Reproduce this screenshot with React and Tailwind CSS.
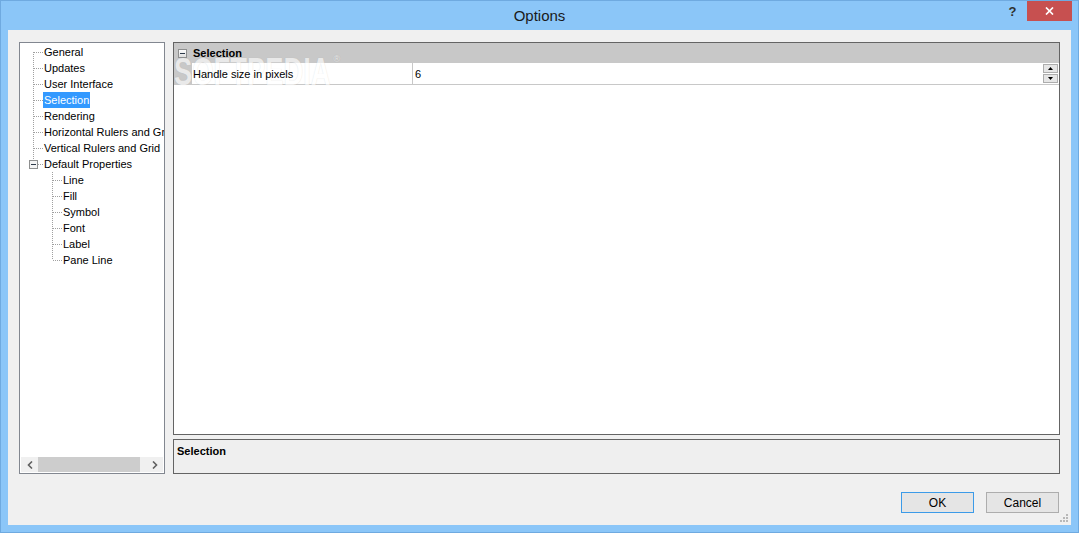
import { useState } from "react";

const FONT = "font-['Liberation_Sans',Arial,sans-serif]";

const treeItems = [
  { label: "General", level: 0, first: true },
  { label: "Updates", level: 0 },
  { label: "User Interface", level: 0 },
  { label: "Selection", level: 0 },
  { label: "Rendering", level: 0 },
  { label: "Horizontal Rulers and Grid", level: 0 },
  { label: "Vertical Rulers and Grid", level: 0 },
  { label: "Default Properties", level: 0, last: true, expander: true },
  { label: "Line", level: 1, first: true },
  { label: "Fill", level: 1 },
  { label: "Symbol", level: 1 },
  { label: "Font", level: 1 },
  { label: "Label", level: 1 },
  { label: "Pane Line", level: 1, last: true },
];

// minus box used by tree and property grid
function MinusBox() {
  return (
    <svg width="9" height="9" viewBox="0 0 9 9" className="shrink-0">
      <defs>
        <linearGradient id="mb" x1="0" y1="0" x2="0" y2="1">
          <stop offset="0" stopColor="#ffffff" />
          <stop offset="1" stopColor="#dcdcdc" />
        </linearGradient>
      </defs>
      <rect x="0.5" y="0.5" width="8" height="8" fill="url(#mb)" stroke="#8e8f8f" />
      <line x1="2" y1="4.5" x2="7" y2="4.5" stroke="#2d3a4a" />
    </svg>
  );
}

function Connector({ level, first, last, expander }) {
  const cx = 13 + 19 * level;
  const w = cx + 10;
  const dot = { stroke: "#a0a0a0", strokeDasharray: "1 1" };
  const x = cx + 0.5;
  return (
    <svg width={w} height="16" className="shrink-0">
      {level === 0 ? (
        <line x1={x} y1={first ? 8 : 0} x2={x} y2={last ? (expander ? 4 : 8) : 16} {...dot} />
      ) : (
        <line x1={x} y1={0} x2={x} y2={last ? 8 : 16} {...dot} />
      )}
      <line x1={expander ? cx + 5 : cx + 1} y1="8.5" x2={cx + 10} y2="8.5" {...dot} />
      {expander && (
        <g transform={`translate(${cx - 4},4)`}>
          <rect x="0.5" y="0.5" width="8" height="8" fill="#f4f4f4" stroke="#8e8f8f" />
          <line x1="2" y1="4.5" x2="7" y2="4.5" stroke="#2d3a4a" />
        </g>
      )}
    </svg>
  );
}

function Chevron({ dir }) {
  return (
    <svg width="6" height="8" viewBox="0 0 6 8">
      <polyline
        points={dir === "left" ? "5,0.5 1.5,4 5,7.5" : "1,0.5 4.5,4 1,7.5"}
        fill="none"
        stroke="#606060"
        strokeWidth="1.6"
      />
    </svg>
  );
}

export default function App() {
  const [selected, setSelected] = useState("Selection");

  return (
    <div className={`w-[1079px] h-[533px] bg-[#8BC6F8] border border-[#6FAAE0] flex flex-col text-[11px] text-black ${FONT}`}>
      {/* title bar */}
      <div className="h-[29px] flex items-start shrink-0">
        <div className="w-[80px]" />
        <div className="flex-1 text-center text-[15px] leading-[29px] text-[#1a1a1a]">Options</div>
        <div className="w-[80px] flex items-start">
          <div className="w-[29px] text-center text-[13px] font-bold leading-[22px] text-[#303030]">?</div>
          <div className="w-[45px] h-[20px] bg-[#C75050] flex items-center justify-center">
            <svg width="9" height="8" viewBox="0 0 9 8">
              <path d="M1 0.5 L8 7.5 M8 0.5 L1 7.5" stroke="white" strokeWidth="1.7" />
            </svg>
          </div>
        </div>
      </div>

      {/* client area */}
      <div className="relative flex-1 mx-[7px] mb-[7px] bg-[#F0F0F0] flex flex-col pt-[12px] px-[11px]">
        <div className="flex gap-[8px] h-[432px]">
          {/* tree */}
          <div className="w-[146px] border border-[#828790] bg-white flex flex-col">
            <div className="flex-1 overflow-hidden pt-[1px]">
              {treeItems.map((it) => (
                <div
                  key={it.label}
                  className="h-4 flex items-center whitespace-nowrap cursor-default"
                  onClick={() => setSelected(it.label)}
                >
                  <Connector {...it} />
                  <span
                    className={`h-4 leading-4 px-px ${
                      selected === it.label ? "bg-[#3399FF] text-white" : ""
                    }`}
                  >
                    {it.label}
                  </span>
                </div>
              ))}
            </div>
            <div className="h-[15px] mx-px mb-px bg-[#F0F0F0] flex items-center">
              <div className="w-[17px] h-full flex items-center justify-center">
                <Chevron dir="left" />
              </div>
              <div className="w-[102px] h-full bg-[#CDCDCD]" />
              <div className="flex-1" />
              <div className="w-[17px] h-full flex items-center justify-center">
                <Chevron dir="right" />
              </div>
            </div>
          </div>

          {/* property grid + description */}
          <div className="flex-1 flex flex-col gap-[4px]">
            <div className="relative h-[393px] border border-[#646464] bg-white flex flex-col overflow-hidden">
              {/* watermark, drawn under the grid texts */}
              <div className="absolute left-[0px] top-[10px] pointer-events-none flex items-start opacity-60">
                <span className="text-[38px] font-bold leading-[38px] text-white scale-x-[0.72] origin-left inline-block [text-shadow:0_0_1px_rgba(0,0,0,0.2)]">
                  SOFTPEDIA
                </span>
                <span className="-ml-[58px] text-[9px] text-white [text-shadow:0_0_1px_rgba(0,0,0,0.3)]">®</span>
              </div>
              <div className="h-[20px] bg-[#C8C8C8] flex items-center pl-[4px] gap-[6px] shrink-0">
                <MinusBox />
                <span className="relative font-bold pt-px">Selection</span>
              </div>
              <div className="h-[22px] border-b border-[#C8C8C8] flex shrink-0">
                <div className="w-[18px] bg-[#C8C8C8]" />
                <div className="w-[221px] border-r border-[#C8C8C8] pl-px pt-px flex items-center">
                  <span className="relative">Handle size in pixels</span>
                </div>
                <div className="flex-1 pl-[2px] pt-px flex items-center">6</div>
                <div className="mr-[1px] pt-[1px] flex flex-col gap-px">
                  <div className="w-[15px] h-[9px] border border-[#ADADAD] bg-[#E6E6E6] flex items-center justify-center">
                    <svg width="5" height="3" viewBox="0 0 5 3"><path d="M2.5 0 L5 3 L0 3 Z" fill="#000" /></svg>
                  </div>
                  <div className="w-[15px] h-[9px] border border-[#ADADAD] bg-[#E6E6E6] flex items-center justify-center">
                    <svg width="5" height="3" viewBox="0 0 5 3"><path d="M0 0 L5 0 L2.5 3 Z" fill="#000" /></svg>
                  </div>
                </div>
              </div>
            </div>
            <div className="h-[35px] border border-[#646464] bg-[#EFEFEF] pl-[3px] pt-[3px] font-bold">
              Selection
            </div>
          </div>
        </div>

        {/* buttons */}
        <div className="mt-[18px] flex justify-end gap-[12px] mr-[1px]">
          <button className="w-[73px] h-[21px] border border-[#3C9BE8] bg-[#E5E5E5] text-[12px] leading-none">
            OK
          </button>
          <button className="w-[73px] h-[21px] border border-[#ADADAD] bg-[#E5E5E5] text-[12px] leading-none">
            Cancel
          </button>
        </div>

        {/* resize grip */}
        <svg width="8" height="8" viewBox="0 0 8 8" className="absolute right-[3px] bottom-[3px]">
          <rect x="6" y="0" width="2" height="2" fill="#B8B8B8" />
          <rect x="3" y="3" width="2" height="2" fill="#B8B8B8" />
          <rect x="6" y="3" width="2" height="2" fill="#B8B8B8" />
          <rect x="0" y="6" width="2" height="2" fill="#B8B8B8" />
          <rect x="3" y="6" width="2" height="2" fill="#B8B8B8" />
          <rect x="6" y="6" width="2" height="2" fill="#B8B8B8" />
        </svg>
      </div>
    </div>
  );
}
